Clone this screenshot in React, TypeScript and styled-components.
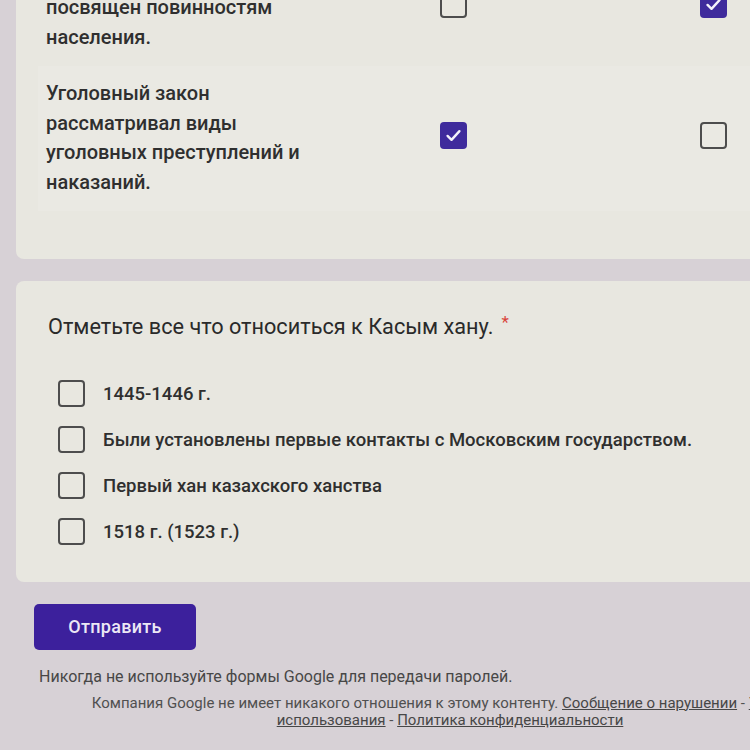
import React from "react";
import styled, { createGlobalStyle } from "styled-components";

const GlobalStyle = createGlobalStyle`
  html, body {
    margin: 0;
    padding: 0;
    background: #d7d1d6;
    overflow: hidden;
  }
  body {
    font-family: Roboto, "Noto Sans", Arial, sans-serif;
  }
`;

const Page = styled.div`
  width: 750px;
  height: 750px;
  overflow: hidden;
  background: #d7d1d6;
`;

const Form = styled.div`
  margin: -74px 0 0 16px;
  width: 868px;
  display: flex;
  flex-direction: column;
  gap: 22px;
`;

const Card = styled.div`
  background: #e8e7e0;
  border-radius: 8px;
`;

const GridCard = styled(Card)`
  padding: 24px 0 48px 22px;
`;

const GridRow = styled.div<{ $alt?: boolean }>`
  display: grid;
  grid-template-columns: 285px 260px 260px;
  align-items: center;
  padding: 13.5px 0;
  background: ${(p) => (p.$alt ? "#eae9e3" : "transparent")};
`;

const RowLabel = styled.div`
  padding: 0 14px 0 8px;
  font-size: 20px;
  line-height: 29.5px;
  font-weight: 500;
  color: #2f2f2f;
`;

const Cell = styled.div`
  display: flex;
  justify-content: center;
  transform: translateY(-3px);
`;

const Box = styled.div<{ $checked?: boolean }>`
  width: 27px;
  height: 27px;
  box-sizing: border-box;
  border-radius: 4px;
  border: ${(p) => (p.$checked ? "none" : "2.5px solid #4d4d4d")};
  background: ${(p) => (p.$checked ? "#3f2b9c" : "transparent")};
  display: flex;
  align-items: center;
  justify-content: center;
  flex-shrink: 0;
`;

const QuestionCard = styled(Card)`
  padding: 27px 32px 27px;
`;

const Title = styled.div`
  font-size: 21.7px;
  line-height: 28px;
  color: #2a2a2a;
  font-weight: 400;
`;

const Required = styled.span`
  color: #d9443a;
  font-size: 17px;
  margin-left: 8px;
  vertical-align: 6px;
`;

const OptionList = styled.div`
  margin-top: 30px;
  display: flex;
  flex-direction: column;
`;

const OptionRow = styled.label`
  display: flex;
  align-items: center;
  gap: 18px;
  height: 46px;
  padding-left: 10px;
`;

const OptionText = styled.span`
  font-size: 18.5px;
  font-weight: 500;
  color: #2f2f2f;
`;

const Bottom = styled.div`
  display: flex;
  flex-direction: column;
`;

const SubmitButton = styled.button`
  width: 162px;
  height: 46px;
  margin-left: 18px;
  border: none;
  border-radius: 5px;
  background: #3c209c;
  color: #ece8f5;
  font-family: Roboto, "Noto Sans", Arial, sans-serif;
  font-size: 18px;
  font-weight: 500;
  letter-spacing: 0.3px;
  cursor: pointer;
`;

const Notice = styled.div`
  margin: 17px 0 0 23px;
  font-size: 16px;
  line-height: 20px;
  color: #474747;
`;

const Legal = styled.div`
  margin-top: 8px;
  padding: 0 60px;
  text-align: center;
  font-size: 15px;
  line-height: 17px;
  color: #505050;
`;

const LegalLink = styled.a`
  color: #474747;
  text-decoration: underline;
`;

const Check = () => (
  <svg width="19" height="19" viewBox="0 0 24 24">
    <path
      d="M4.5 12.5 L9.5 17.5 L19.5 6.5"
      fill="none"
      stroke="#f4f2fa"
      strokeWidth="3"
      strokeLinecap="round"
      strokeLinejoin="round"
    />
  </svg>
);

const CheckBox = ({ checked }: { checked?: boolean }) => (
  <Box $checked={checked}>{checked && <Check />}</Box>
);

const gridRows = [
  {
    label: "Общественный закон посвящен повинностям населения.",
    a: false,
    b: true,
  },
  {
    label: "Уголовный закон рассматривал виды уголовных преступлений и наказаний.",
    a: true,
    b: false,
    alt: true,
  },
];

const options = [
  "1445-1446 г.",
  "Были установлены первые контакты с Московским государством.",
  "Первый хан казахского ханства",
  "1518 г. (1523 г.)",
];

export default function App() {
  return (
    <Page>
      <GlobalStyle />
      <Form>
        <GridCard>
          {gridRows.map((r) => (
            <GridRow key={r.label} $alt={r.alt}>
              <RowLabel>{r.label}</RowLabel>
              <Cell>
                <CheckBox checked={r.a} />
              </Cell>
              <Cell>
                <CheckBox checked={r.b} />
              </Cell>
            </GridRow>
          ))}
        </GridCard>

        <QuestionCard>
          <Title>
            Отметьте все что относиться к Касым хану.
            <Required>*</Required>
          </Title>
          <OptionList>
            {options.map((o) => (
              <OptionRow key={o}>
                <CheckBox />
                <OptionText>{o}</OptionText>
              </OptionRow>
            ))}
          </OptionList>
        </QuestionCard>

        <Bottom>
          <SubmitButton>Отправить</SubmitButton>
          <Notice>Никогда не используйте формы Google для передачи паролей.</Notice>
          <Legal>
            Компания Google не имеет никакого отношения к этому контенту.{" "}
            <LegalLink>Сообщение о нарушении</LegalLink> -{" "}
            <LegalLink>Условия использования</LegalLink> -{" "}
            <LegalLink>Политика конфиденциальности</LegalLink>
          </Legal>
        </Bottom>
      </Form>
    </Page>
  );
}
